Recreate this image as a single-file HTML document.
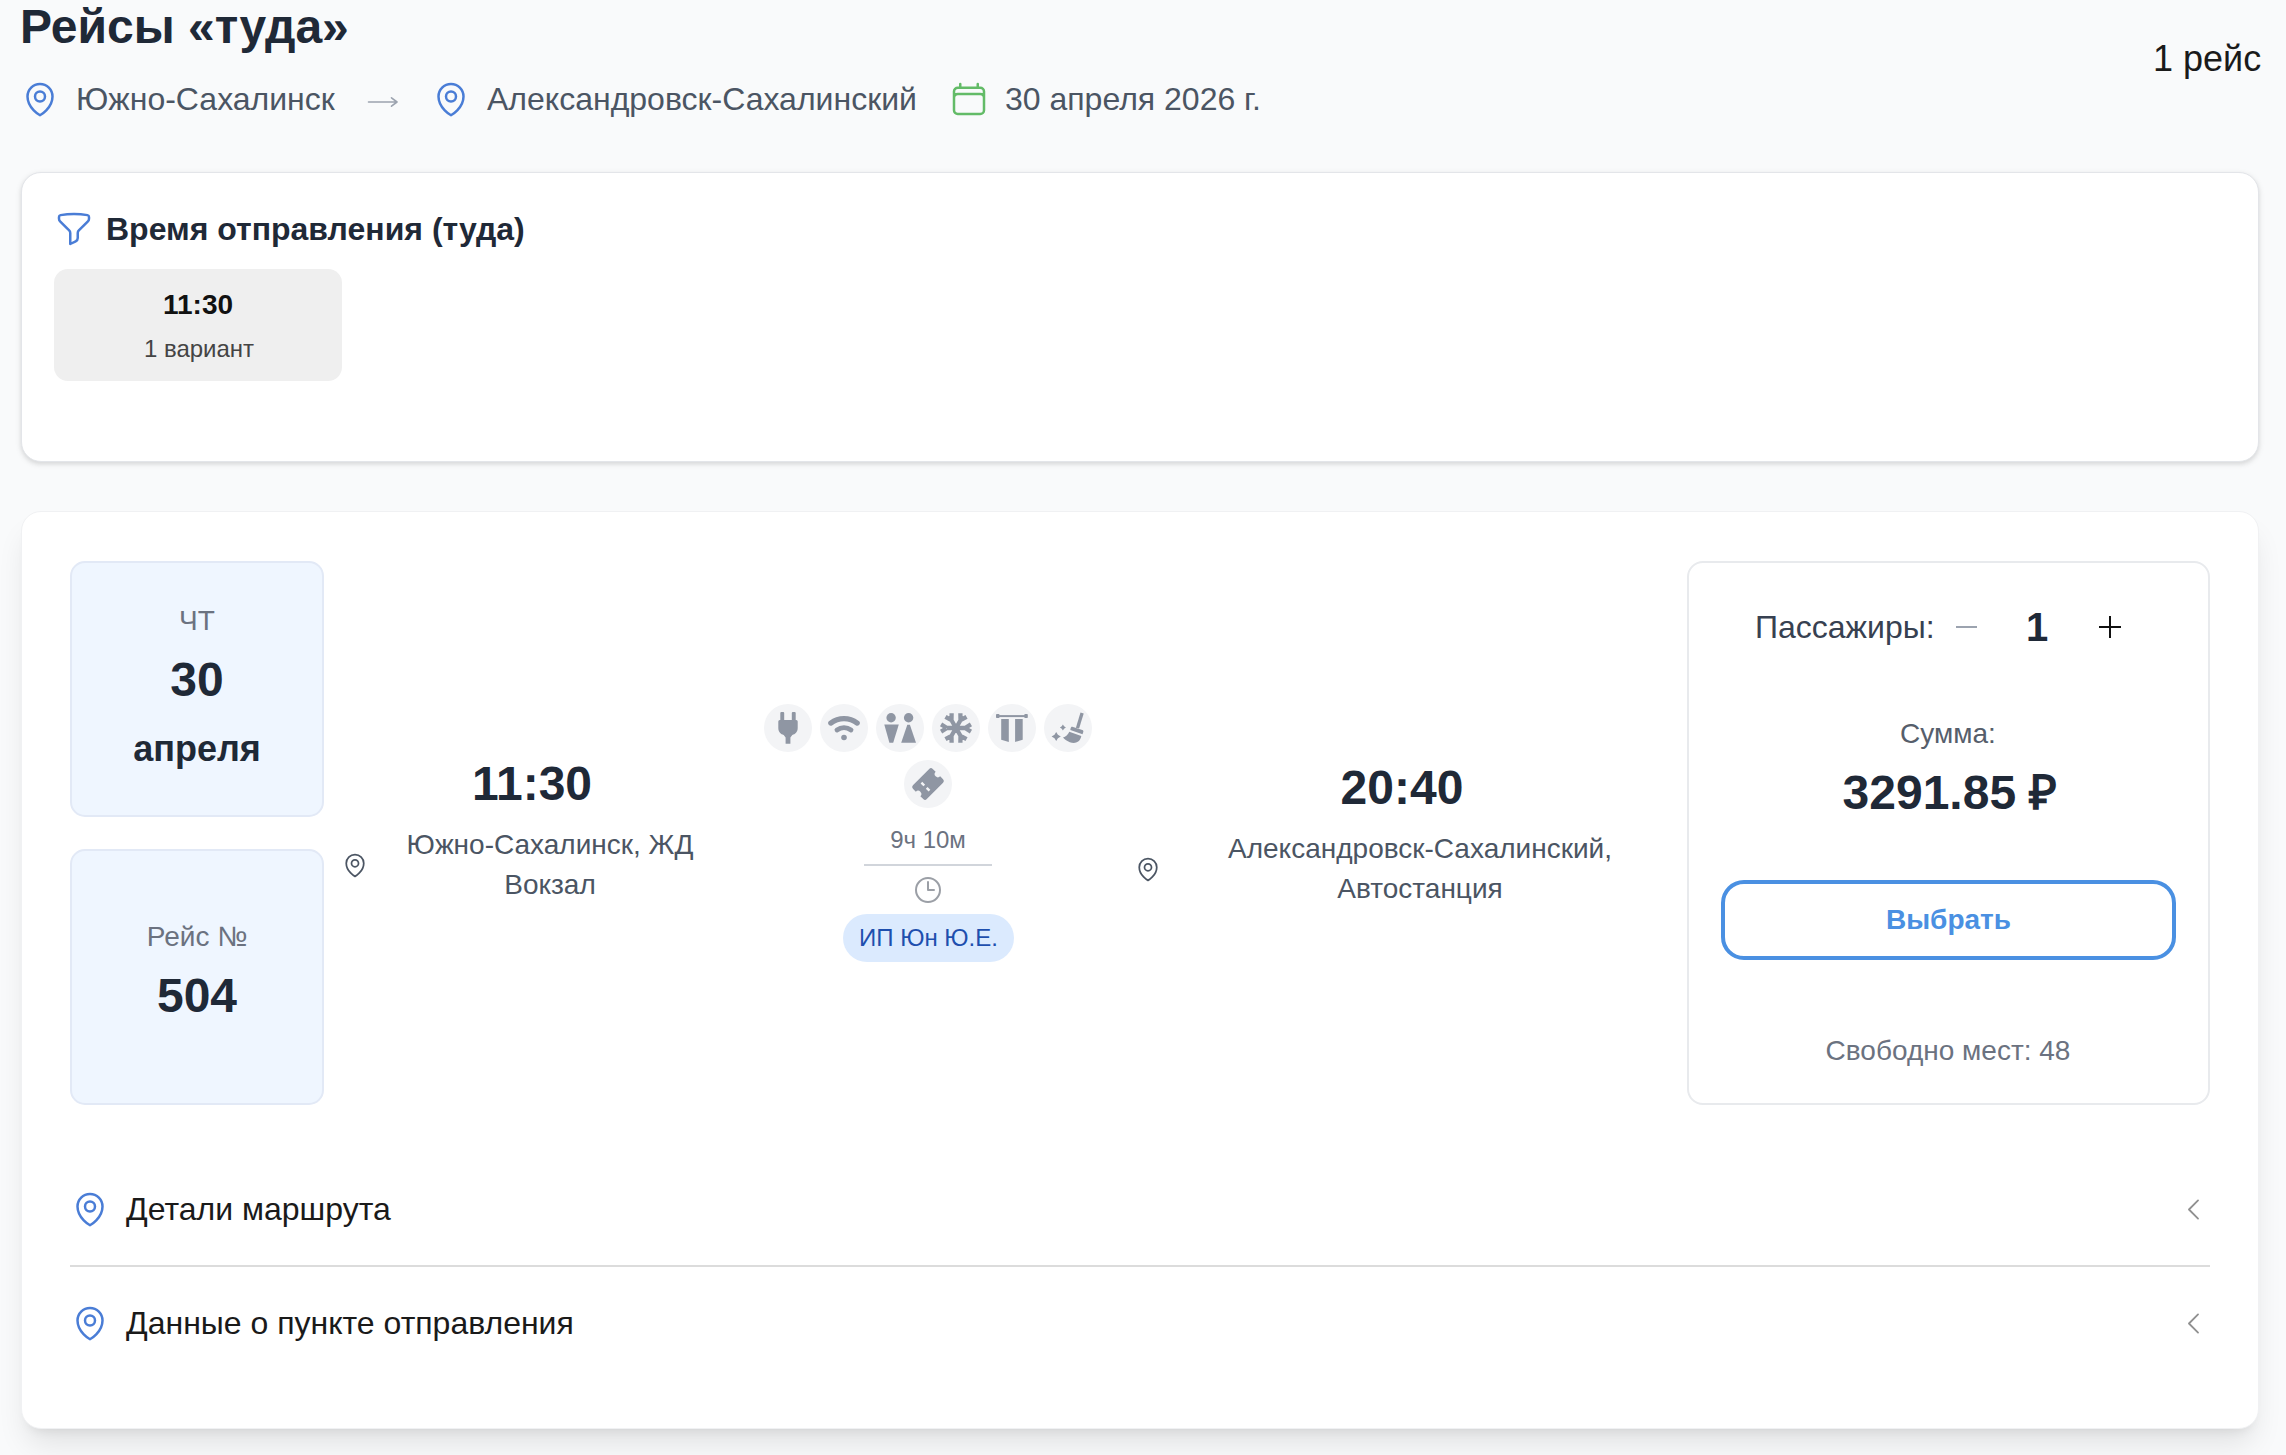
<!DOCTYPE html>
<html lang="ru">
<head>
<meta charset="utf-8">
<title>Рейсы «туда»</title>
<style>
*{box-sizing:border-box;margin:0;padding:0}
html,body{width:2286px;height:1455px;overflow:hidden;background:#f9fafb}
body{font-family:"Liberation Sans",sans-serif;color:#1f2937;position:relative}
.t{position:absolute;white-space:nowrap;line-height:1}
.c{text-align:center}
.b{font-weight:700}
.abs{position:absolute}
svg.h{position:absolute;overflow:visible}
.card{position:absolute;background:#fff;border-radius:20px}
.ic{position:absolute;width:48px;height:48px;border-radius:50%;background:#f3f4f6}
.ic svg{position:absolute;left:0;top:0;width:48px;height:48px;fill:#8f96a3}
.box{position:absolute;border-radius:15px;background:#eff6ff;border:2px solid #e2e9f6}
</style>
</head>
<body>

<!-- ===== Header ===== -->
<div class="t b" id="title" style="left:20px;top:3px;font-size:48px;color:#1f2937">Рейсы «туда»</div>

<svg id="pin1" class="h" style="left:20px;top:79px;width:40px;height:40px" viewBox="0 0 24 24" fill="none" stroke="#4a7dd6" stroke-width="1.5" stroke-linecap="round" stroke-linejoin="round"><path d="M15 10.5a3 3 0 11-6 0 3 3 0 016 0z"/><path d="M19.5 10.5c0 7.142-7.5 11.25-7.5 11.25S4.5 17.642 4.5 10.5a7.5 7.5 0 1115 0z"/></svg>
<div class="t" id="from" style="left:76px;top:83px;font-size:32px;color:#4b5563">Южно-Сахалинск</div>
<svg id="arr" class="h" style="left:366px;top:94px;width:34px;height:16px" viewBox="0 0 34 16" fill="none" stroke="#9ca3af" stroke-width="1.6" stroke-linecap="round" stroke-linejoin="round"><path d="M2.500 8H31M25.500 3.800L31 8l-5.500 4.200"/></svg>
<svg id="pin2" class="h" style="left:431px;top:79px;width:40px;height:40px" viewBox="0 0 24 24" fill="none" stroke="#4a7dd6" stroke-width="1.5" stroke-linecap="round" stroke-linejoin="round"><path d="M15 10.5a3 3 0 11-6 0 3 3 0 016 0z"/><path d="M19.5 10.5c0 7.142-7.5 11.25-7.5 11.25S4.5 17.642 4.5 10.5a7.5 7.5 0 1115 0z"/></svg>
<div class="t" id="to" style="left:487px;top:83px;font-size:32px;color:#4b5563">Александровск-Сахалинский</div>
<svg id="cal" class="h" style="left:949px;top:79px;width:40px;height:40px" viewBox="0 0 24 24" fill="none" stroke="#63bb67" stroke-width="1.5" stroke-linecap="round" stroke-linejoin="round"><path d="M6.75 3v2.25M17.25 3v2.25M3 18.75V7.5a2.25 2.25 0 012.25-2.25h13.5A2.25 2.25 0 0121 7.5v11.25m-18 0A2.25 2.25 0 005.25 21h13.5A2.25 2.25 0 0021 18.75m-18 0v-7.5A2.25 2.25 0 015.25 9h13.5A2.25 2.25 0 0121 11.25v7.5"/></svg>
<div class="t" id="date" style="left:1005px;top:83px;font-size:32px;color:#4b5563">30 апреля 2026 г.</div>

<div class="t" id="cnt" style="left:2153px;top:41px;font-size:36px;color:#1a1a1a">1 рейс</div>

<!-- ===== Filter card ===== -->
<div class="card" id="card1" style="left:21px;top:172px;width:2238px;height:290px;border:1px solid #e3e5e9;box-shadow:0 2px 6px rgba(0,0,0,.10),0 2px 4px rgba(0,0,0,.06)"></div>
<svg id="funnel" class="h" style="left:54px;top:209px;width:40px;height:40px" viewBox="0 0 24 24" fill="none" stroke="#4a7dd6" stroke-width="1.5" stroke-linecap="round" stroke-linejoin="round"><path d="M12 3c2.755 0 5.455.232 8.083.678.533.09.917.556.917 1.096v1.044a2.25 2.25 0 01-.659 1.591l-5.432 5.432a2.25 2.25 0 00-.659 1.591v2.927a2.25 2.25 0 01-1.244 2.013L9.750 21v-6.568a2.25 2.25 0 00-.659-1.591L3.659 7.409A2.25 2.25 0 013 5.818V4.774c0-.54.384-1.006.917-1.096A48.320 48.320 0 0112 3z"/></svg>
<div class="t b" id="ftitle" style="left:106px;top:213px;font-size:32px;color:#1f2937">Время отправления (туда)</div>
<div class="abs" id="chip" style="left:54px;top:269px;width:288px;height:112px;border-radius:14px;background:#efefef"></div>
<div class="t b c" id="chipt" style="left:54px;width:288px;top:291px;font-size:28px;color:#111">11:30</div>
<div class="t c" id="chips" style="left:55px;width:288px;top:337px;font-size:24px;color:#444">1 вариант</div>

<!-- ===== Trip card ===== -->
<div class="card" id="card2" style="left:21px;top:511px;width:2238px;height:918px;border:1px solid #f0f1f3;box-shadow:0 20px 30px -6px rgba(0,0,0,.10),0 8px 12px -8px rgba(0,0,0,.10)"></div>

<div class="box" id="dbox" style="left:70px;top:561px;width:254px;height:256px"></div>
<div class="t c" id="dow" style="left:70px;width:254px;top:607px;font-size:28px;color:#6b7280">ЧТ</div>
<div class="t c b" id="dnum" style="left:70px;width:254px;top:656px;font-size:48px;color:#1f2937">30</div>
<div class="t c b" id="dmon" style="left:70px;width:254px;top:731px;font-size:36px;color:#1f2937">апреля</div>

<div class="box" id="fbox" style="left:70px;top:849px;width:254px;height:256px"></div>
<div class="t c" id="flbl" style="left:70px;width:254px;top:923px;font-size:28px;color:#6b7280">Рейс №</div>
<div class="t c b" id="fnum" style="left:70px;width:254px;top:972px;font-size:48px;color:#1f2937">504</div>

<!-- departure -->
<div class="t c b" id="t1" style="left:332px;width:400px;top:760px;font-size:48px;color:#1f2937">11:30</div>
<svg id="pin3" class="h" style="left:340.5px;top:851px;width:28px;height:28px" viewBox="0 0 24 24" fill="none" stroke="#4b5563" stroke-width="1.5" stroke-linecap="round" stroke-linejoin="round"><path d="M15 10.5a3 3 0 11-6 0 3 3 0 016 0z"/><path d="M19.5 10.5c0 7.142-7.5 11.25-7.5 11.25S4.5 17.642 4.5 10.5a7.5 7.5 0 1115 0z"/></svg>
<div class="t c" id="s1a" style="left:350px;width:400px;top:831px;font-size:28px;color:#4b5563">Южно-Сахалинск, ЖД</div>
<div class="t c" id="s1b" style="left:350px;width:400px;top:871px;font-size:28px;color:#4b5563">Вокзал</div>

<!-- amenities -->
<div class="ic" id="ic1" style="left:764px;top:704px"><svg viewBox="0 0 48 48"><rect x="16.3" y="8" width="3.9" height="10" rx="1"/><rect x="27.8" y="8" width="3.9" height="10" rx="1"/><path d="M15.8 16H32.200a1.500 1.500 0 011.500 1.500V24c0 4.200-2.600 6.300-5.400 6.900L26.400 33.500V39.700H21.600V33.500L19.700 30.900C16.900 30.300 14.300 28.200 14.300 24V17.500a1.500 1.500 0 011.500-1.500z"/></svg></div>
<div class="ic" id="ic2" style="left:820px;top:704px"><svg viewBox="0 0 48 48"><path d="M10.8 19.1A21.5 21.5 0 0137.2 19.1" fill="none" stroke="#8f96a3" stroke-width="5.2" stroke-linecap="round"/><path d="M17 25.9A12.4 12.4 0 0131 25.9" fill="none" stroke="#8f96a3" stroke-width="4.9" stroke-linecap="round"/><circle cx="24" cy="33.5" r="2.8"/></svg></div>
<div class="ic" id="ic3" style="left:876px;top:704px"><svg viewBox="0 0 48 48"><circle cx="15.1" cy="13.700" r="4.700"/><circle cx="32.600" cy="13.700" r="4.700"/><path d="M8.300 20.600H22.800L17.200 38.700H13.400z"/><path d="M31.300 20.800h2.600L40 38.700H25.200z"/></svg></div>
<div class="ic" id="ic4" style="left:932px;top:704px"><svg viewBox="0 0 48 48"><path d="M24 24L33.00 24.00M33.00 24.00L38.91 27.55M33.00 24.00L38.91 20.45M24 24L28.50 16.21M28.50 16.21L34.53 12.86M28.50 16.21L28.38 9.31M24 24L19.50 16.21M19.50 16.21L19.62 9.31M19.50 16.21L13.47 12.86M24 24L15.00 24.00M15.00 24.00L9.09 20.45M15.00 24.00L9.09 27.55M24 24L19.50 31.79M19.50 31.79L13.47 35.14M19.50 31.79L19.62 38.69M24 24L28.50 31.79M28.50 31.79L28.38 38.69M28.50 31.79L34.53 35.14" fill="none" stroke="#8f96a3" stroke-width="4.3" stroke-linecap="butt" stroke-linejoin="round"/><circle cx="24" cy="24" r="3.600"/></svg></div>
<div class="ic" id="ic5" style="left:988px;top:704px"><svg viewBox="0 0 48 48"><rect x="8" y="10.100" width="3.500" height="3.900" rx=".8"/><rect x="36.300" y="10.100" width="3.500" height="3.900" rx=".8"/><rect x="10" y="11.100" width="28" height="2"/><path d="M13.200 15.100h7.600V38L13.200 35.700z"/><path d="M27.100 15.100h7.600V35.700L27.100 38z"/></svg></div>
<div class="ic" id="ic6" style="left:1044px;top:704px"><svg viewBox="0 0 48 48"><path d="M36.500 8.500l3.200.9-4.600 15.200-3.200-.9z"/><path d="M28.300 22.700l10 3.400c.9.300 1.300 1.200 1 2l-.8 2.200-12.200-4.400.4-1.800c.2-1 .8-1.700 1.600-1.400z"/><path d="M25.300 27.800l12 4.300c-.3 2.200-1.400 4.200-3.100 5.500-2.300 1.700-5.400 1.600-8.400.6-2.500-.8-5-2.400-6.800-4.600 2.700-.8 5-3 6.300-5.800z"/><path d="M12.2 27.9l1.7 2.9 2.9 1.7-2.9 1.7-1.7 2.9-1.7-2.9-2.9-1.7 2.9-1.7z"/><path d="M18.9 20.5l1.15 1.85 1.85 1.15-1.85 1.15-1.15 1.85-1.15-1.85-1.85-1.15 1.85-1.15z"/></svg></div>
<div class="ic" id="ic7" style="left:904px;top:760px"><svg viewBox="0 0 48 48"><g transform="translate(24 24) rotate(-45)"><path fill-rule="evenodd" d="M-11.500 -9.800H11.500a2.500 2.500 0 012.500 2.500V-3.200a3.200 3.200 0 000 6.400V7.300A2.500 2.500 0 0111.500 9.800H-11.500a2.500 2.500 0 01-2.500-2.500V3.200a3.200 3.200 0 000-6.400V-7.300A2.500 2.500 0 01-11.500-9.800zM-4.900-5.600h2.400v4h-2.400zM-4.900 1.800h2.400v4h-2.400z"/></g></svg></div>

<div class="t c" id="dur" style="left:828px;width:200px;top:828px;font-size:24px;color:#6b7280">9ч 10м</div>
<div class="abs" id="durline" style="left:864px;top:864px;width:128px;height:2px;background:#d1d5db"></div>
<svg id="clock" class="h" style="left:912px;top:874px;width:32px;height:32px" viewBox="0 0 24 24" fill="none" stroke="#9b9fa6" stroke-width="1.5" stroke-linecap="round" stroke-linejoin="round"><path d="M12 6v6h4.500m4.500 0a9 9 0 11-18 0 9 9 0 0118 0z"/></svg>
<div class="abs" id="badge" style="left:843px;top:914px;width:171px;height:48px;border-radius:24px;background:#dbeafe"></div>
<div class="t c" id="badget" style="left:843px;width:171px;top:926px;font-size:24px;color:#1e4fae">ИП Юн Ю.Е.</div>

<!-- arrival -->
<div class="t c b" id="t2" style="left:1202px;width:400px;top:764px;font-size:48px;color:#1f2937">20:40</div>
<svg id="pin4" class="h" style="left:1133.7px;top:855px;width:28px;height:28px" viewBox="0 0 24 24" fill="none" stroke="#4b5563" stroke-width="1.5" stroke-linecap="round" stroke-linejoin="round"><path d="M15 10.5a3 3 0 11-6 0 3 3 0 016 0z"/><path d="M19.5 10.5c0 7.142-7.5 11.25-7.5 11.25S4.5 17.642 4.5 10.5a7.5 7.5 0 1115 0z"/></svg>
<div class="t c" id="s2a" style="left:1170px;width:500px;top:835px;font-size:28px;color:#4b5563">Александровск-Сахалинский,</div>
<div class="t c" id="s2b" style="left:1170px;width:500px;top:875px;font-size:28px;color:#4b5563">Автостанция</div>

<!-- price panel -->
<div class="abs" id="panel" style="left:1687px;top:561px;width:523px;height:544px;border-radius:16px;background:#fff;border:2px solid #e8eaed"></div>
<div class="t" id="pass" style="left:1755px;top:611px;font-size:32px;color:#374151">Пассажиры:</div>
<div class="abs" id="minus" style="left:1956px;top:626px;width:21px;height:2px;background:#9ca3af"></div>
<div class="t b c" id="pnum" style="left:1987px;width:100px;top:607px;font-size:40px;color:#1f2937">1</div>
<div class="abs" id="plusH" style="left:2099px;top:626px;width:22px;height:2px;background:#111"></div>
<div class="abs" id="plusV" style="left:2109px;top:616px;width:2px;height:22px;background:#111"></div>
<div class="t c" id="sum" style="left:1748px;width:400px;top:720px;font-size:28px;color:#565e6b">Сумма:</div>
<div class="t c b" id="price" style="left:1750px;width:400px;top:769px;font-size:48px;color:#1f2937">3291.85 ₽</div>
<div class="abs" id="btn" style="left:1721px;top:880px;width:455px;height:80px;border-radius:23px;border:4px solid #4a90e2;background:#fff"></div>
<div class="t c b" id="btnt" style="left:1721px;width:455px;top:906px;font-size:28px;color:#4a90e2">Выбрать</div>
<div class="t c" id="free" style="left:1748px;width:400px;top:1037px;font-size:28px;color:#6b7280">Свободно мест: 48</div>

<!-- accordions -->
<svg id="pin5" class="h" style="left:70px;top:1189px;width:40px;height:40px" viewBox="0 0 24 24" fill="none" stroke="#4a7dd6" stroke-width="1.5" stroke-linecap="round" stroke-linejoin="round"><path d="M15 10.5a3 3 0 11-6 0 3 3 0 016 0z"/><path d="M19.5 10.5c0 7.142-7.5 11.25-7.5 11.25S4.5 17.642 4.5 10.5a7.5 7.5 0 1115 0z"/></svg>
<div class="t" id="acc1" style="left:126px;top:1193px;font-size:32px;color:#1a1a1a">Детали маршрута</div>
<svg id="chev1" class="h" style="left:2179.2px;top:1195px;width:29px;height:29px" viewBox="0 0 24 24" fill="none" stroke="#909090" stroke-width="1.5" stroke-linecap="round" stroke-linejoin="round"><path d="M15.750 19.500L8.250 12l7.500-7.500"/></svg>
<div class="abs" id="div1" style="left:70px;top:1265px;width:2140px;height:2px;background:#dcdcdc"></div>
<svg id="pin6" class="h" style="left:70px;top:1303px;width:40px;height:40px" viewBox="0 0 24 24" fill="none" stroke="#4a7dd6" stroke-width="1.5" stroke-linecap="round" stroke-linejoin="round"><path d="M15 10.5a3 3 0 11-6 0 3 3 0 016 0z"/><path d="M19.5 10.5c0 7.142-7.5 11.25-7.5 11.25S4.5 17.642 4.5 10.5a7.5 7.5 0 1115 0z"/></svg>
<div class="t" id="acc2" style="left:126px;top:1307px;font-size:32px;color:#1a1a1a">Данные о пункте отправления</div>
<svg id="chev2" class="h" style="left:2179.2px;top:1309px;width:29px;height:29px" viewBox="0 0 24 24" fill="none" stroke="#909090" stroke-width="1.5" stroke-linecap="round" stroke-linejoin="round"><path d="M15.750 19.500L8.250 12l7.500-7.500"/></svg>

</body>
</html>
